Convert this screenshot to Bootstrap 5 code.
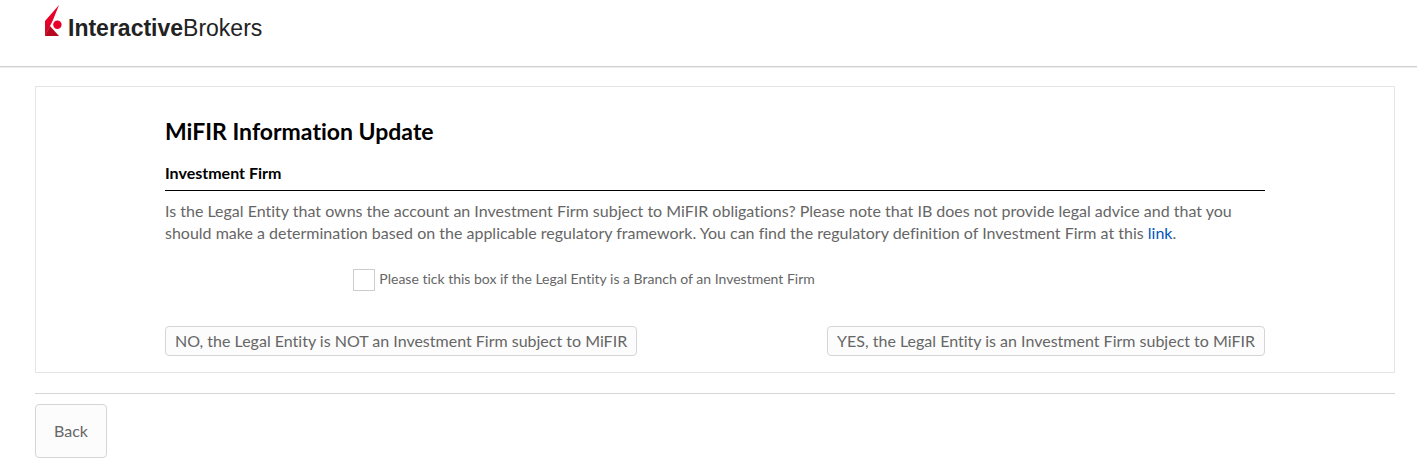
<!DOCTYPE html>
<html lang="en">
<head>
<meta charset="utf-8">
<meta name="viewport" content="width=device-width, initial-scale=1">
<title>MiFIR Information Update</title>
<link rel="stylesheet" href="https://cdn.jsdelivr.net/npm/bootstrap@5.3.0/dist/css/bootstrap.min.css">
<style>
  body { font-family: Lato, "Liberation Sans", sans-serif; font-size: 16px; line-height: 22px; color: #666; background: #fff; }
  body, button { font-variant-ligatures: none; }
  .site-header { height: 68px; padding: 5px 45px; border-bottom: 1px solid #eee; box-shadow: inset 0 -1px #d0d0d0; }
  .brand-mark { width: 17px; height: 32px; }
  .brand-name { font: 23px/26px "Liberation Sans", sans-serif; color: #222; padding-top: 10px; margin-left: 6px; }
  .page-body { padding: 18px 22px 10px 35px; }
  .panel { border: 1px solid #e5e5e5; padding: 29px 16px 16px; }
  .panel-inner { max-width: 1100px; }
  h1 { font-size: 23px; line-height: 30px; font-weight: 700; color: #000; }
  h2 { font-size: 16px; line-height: 22px; font-weight: 700; color: #000; padding-bottom: 6px; border-bottom: 1px solid #000; margin-bottom: 9px; }
  .question { margin-bottom: 25px; }
  .question a { color: #0055b8; }
  .branch-row { --bs-gutter-x: 30px; }
  .form-check-input.branch-box { width: 22px; height: 22px; border: 1px solid #ccc; border-radius: 0; }
  .branch-label { font-size: 14px; line-height: 20px; }
  .answers { margin-top: 35px; }
  .btn-plain { --bs-btn-color: #666; --bs-btn-bg: #fcfcfc; --bs-btn-border-color: #d5d5d5; --bs-btn-hover-bg: #f2f2f2; --bs-btn-border-radius: 4px; --bs-btn-font-size: 16px; --bs-btn-line-height: 22px; --bs-btn-padding-x: 9px; --bs-btn-padding-y: 3px; }
  .btn-back { --bs-btn-padding-x: 18px; --bs-btn-padding-y: 15px; }
  .page-actions { border-top: 1px solid #d5d5d5; margin-top: 20px; padding-top: 10px; }
</style>
</head>
<body>
<header class="site-header">
  <a href="#" class="d-inline-flex align-items-start text-decoration-none" aria-label="InteractiveBrokers">
    <svg class="brand-mark" viewBox="0 0 17 32" aria-hidden="true">
      <path d="M14 0 0 16V31L5 21 8 15Z" fill="#e8002a"/>
      <path d="M0 31 5 21 14 31Z" fill="#b8081f"/>
      <path d="M0 18V31L5 21Z" fill="#d4082a"/>
      <circle cx="12.400" cy="19.800" r="4.200" fill="#e8002a"/>
    </svg>
    <span class="brand-name"><b>Interactive</b>Brokers</span>
  </a>
</header>
<main class="page-body">
  <section class="panel">
    <div class="panel-inner mx-auto">
      <h1 class="mb-3">MiFIR Information Update</h1>
      <h2>Investment Firm</h2>
      <p class="question">Is the Legal Entity that owns the account an Investment Firm subject to MiFIR obligations? Please note that IB does not provide legal advice and that you should make a determination based on the applicable regulatory framework. You can find the regulatory definition of Investment Firm at this <a href="#" class="text-decoration-none">link</a>.</p>
      <div class="row branch-row">
        <div class="col-10 offset-2 d-flex">
          <input class="form-check-input branch-box m-0 me-1 flex-shrink-0" type="checkbox" id="branch">
          <label class="branch-label" for="branch">Please tick this box if the Legal Entity is a Branch of an Investment Firm</label>
        </div>
      </div>
      <div class="answers d-flex flex-wrap justify-content-between gap-2">
        <button type="button" class="btn btn-plain">NO, the Legal Entity is NOT an Investment Firm subject to MiFIR</button>
        <button type="button" class="btn btn-plain">YES, the Legal Entity is an Investment Firm subject to MiFIR</button>
      </div>
    </div>
  </section>
  <div class="page-actions">
    <button type="button" class="btn btn-plain btn-back">Back</button>
  </div>
</main>
<script src="https://cdn.jsdelivr.net/npm/bootstrap@5.3.0/dist/js/bootstrap.bundle.min.js"></script>
</body>
</html>
